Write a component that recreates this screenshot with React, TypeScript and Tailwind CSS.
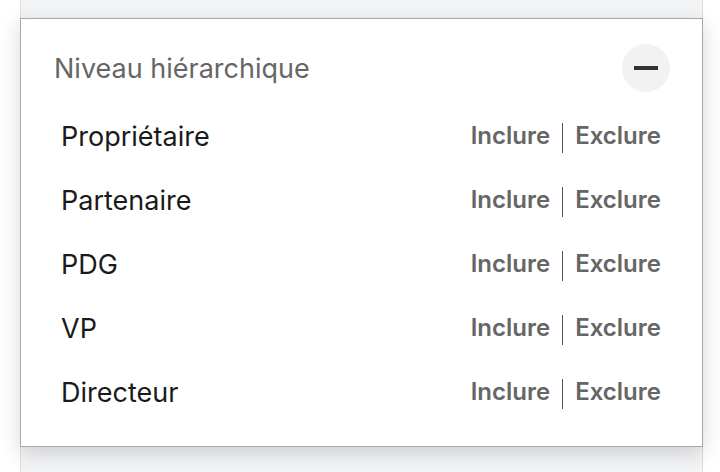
import React from 'react';

const levels = ['Propriétaire', 'Partenaire', 'PDG', 'VP', 'Directeur'];

export default function App() {
  return (
    <div
      className="w-[720px] h-[472px] bg-white overflow-hidden"
      style={{ fontFamily: 'Inter, "Noto Sans", sans-serif' }}
    >
      {/* grey panel behind the open filter card */}
      <div className="ml-[20px] w-[683px] h-[472px] bg-[#f3f4f6] border-x border-[#dcdcdc] pt-[18px]">
        <div className="-mx-px bg-white border border-[#a8a8a8] shadow-[0_6px_20px_rgba(0,0,0,0.16)] pb-[22px]">
          {/* Header */}
          <div className="flex items-center justify-between pl-[33px] pr-[32px] pt-[25px]">
            <span className="text-[27px] leading-none text-[#666666]">Niveau hiérarchique</span>
            <button className="w-12 h-12 rounded-full bg-[#f2f2f2] flex items-center justify-center">
              <span className="block w-6 h-1 bg-[#333333]" />
            </button>
          </div>

          {/* Options */}
          <ul className="mt-[12px]">
            {levels.map((level) => (
              <li key={level} className="h-16 flex items-center justify-between pl-[40px] pr-[41px]">
                <span className="text-[27px] leading-none text-[#1a1a1a]">{level}</span>
                <div className="flex items-center gap-[12px] text-[24px] leading-none font-semibold text-[#666666]">
                  <span>Inclure</span>
                  <span className="block w-px h-[30px] bg-[#555555] mt-[4px]" />
                  <span>Exclure</span>
                </div>
              </li>
            ))}
          </ul>
        </div>
      </div>
    </div>
  );
}
